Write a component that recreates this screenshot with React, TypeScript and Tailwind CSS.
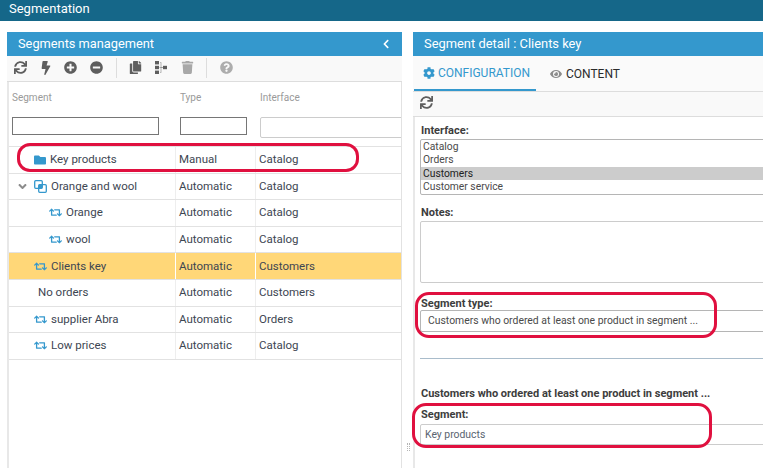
import { FaSync, FaBolt, FaPlusCircle, FaMinusCircle, FaCopy, FaTrash, FaQuestionCircle, FaCog, FaEye, FaFolder, FaRetweet, FaChevronLeft, FaAngleDown } from 'react-icons/fa';

interface Row {
  name: string;
  type: string;
  iface: string;
  indent: number;
  icon?: 'folder' | 'group' | 'auto';
  expander?: boolean;
  selected?: boolean;
}

const ROWS: Row[] = [
  { name: 'Key products', type: 'Manual', iface: 'Catalog', indent: 34, icon: 'folder' },
  { name: 'Orange and wool', type: 'Automatic', iface: 'Catalog', indent: 34, icon: 'group', expander: true },
  { name: 'Orange', type: 'Automatic', iface: 'Catalog', indent: 49, icon: 'auto' },
  { name: 'wool', type: 'Automatic', iface: 'Catalog', indent: 49, icon: 'auto' },
  { name: 'Clients key', type: 'Automatic', iface: 'Customers', indent: 34, icon: 'auto', selected: true },
  { name: 'No orders', type: 'Automatic', iface: 'Customers', indent: 38 },
  { name: 'supplier Abra', type: 'Automatic', iface: 'Orders', indent: 34, icon: 'auto' },
  { name: 'Low prices', type: 'Automatic', iface: 'Catalog', indent: 34, icon: 'auto' },
];

function GroupIcon() {
  return (
    <svg width="13" height="13" viewBox="0 0 13 13" fill="none" className="shrink-0 text-[#3498cd]">
      <rect x="0.7" y="0.7" width="7.6" height="7.6" rx="1" stroke="currentColor" strokeWidth="1.3" />
      <rect x="4.7" y="4.7" width="7.6" height="7.6" rx="1" stroke="currentColor" strokeWidth="1.3" />
      <rect x="4.7" y="4.7" width="3.6" height="3.6" fill="currentColor" />
    </svg>
  );
}

function TreeIcon() {
  return (
    <svg width="12" height="13" viewBox="0 0 12 13" className="shrink-0 text-[#5e5e5e]" fill="currentColor">
      <rect x="0" y="0" width="4" height="3.4" />
      <rect x="0" y="4.8" width="4" height="3.4" />
      <rect x="0" y="9.6" width="4" height="3.4" />
      <rect x="8" y="4.8" width="4" height="3.4" />
      <path d="M5 1.2h1.4v10.6H5v-.8h.6V7H4.6V6h1V2H5z" opacity="0.55" />
      <rect x="6" y="6" width="2" height="1" opacity="0.55" />
    </svg>
  );
}

function TreeRow({ row }: { row: Row }) {
  return (
    <div className={`flex h-[26.6px] shrink-0 border-b border-[#e2e2e2] text-[11.5px] text-[#3d4652] ${row.selected ? 'bg-[#ffd778]' : ''}`}>
      <div
        className={`relative flex w-[167px] shrink-0 items-center border-r ${row.selected ? 'border-white' : 'border-[#eeeeee]'}`}
        style={{ paddingLeft: row.indent - 9 }}
      >
        {row.expander && <FaAngleDown className="absolute left-[7px] top-[6px] text-[13px] text-[#8c8c8c]" />}
        {row.icon === 'folder' && <FaFolder className="mr-[4px] shrink-0 text-[12px] text-[#3498cd]" />}
        {row.icon === 'group' && <span className="mr-[4px] flex"><GroupIcon /></span>}
        {row.icon === 'auto' && <FaRetweet className="mr-[4px] shrink-0 text-[13px] text-[#3498cd]" />}
        <span>{row.name}</span>
      </div>
      <div className={`flex w-[80px] shrink-0 items-center border-r pl-[3px] ${row.selected ? 'border-white' : 'border-[#eeeeee]'}`}>{row.type}</div>
      <div className="flex flex-1 items-center pl-[3px]">{row.iface}</div>
    </div>
  );
}

function LeftPanel() {
  return (
    <section className="flex w-[395px] shrink-0 flex-col">
      <header className="flex h-[24px] shrink-0 items-center justify-between bg-[#3498cd] pl-[11px] pr-[11px] text-[12.8px] text-white">
        <span>Segments management</span>
        <FaChevronLeft className="text-[10px]" />
      </header>
      <div className="flex h-[26px] shrink-0 items-center border-b border-[#dddddd] bg-[#f9f9f9] pb-[2px] pl-[6px] text-[#5e5e5e]">
        <FaSync className="ml-px text-[13px]" />
        <FaBolt className="ml-[12px] text-[14px]" />
        <FaPlusCircle className="ml-[11px] text-[13px]" />
        <FaMinusCircle className="ml-[13px] text-[13px]" />
        <span className="ml-[13px] h-[20px] w-px bg-[#dddddd]" />
        <FaCopy className="ml-[12px] text-[13px]" />
        <span className="ml-[13px] flex"><TreeIcon /></span>
        <FaTrash className="ml-[14px] text-[13px] text-[#a8a8a8]" />
        <span className="ml-[12px] h-[20px] w-px bg-[#dddddd]" />
        <FaQuestionCircle className="ml-[13px] text-[13px] text-[#adadad]" />
      </div>
      <div className="flex min-h-0 flex-1 flex-col overflow-hidden border-r border-l-2 border-r-[#e2e2e2] border-l-[#e8e8e8]">
        <div className="flex h-[65px] shrink-0 border-b border-[#e2e2e2] text-[10px] text-[#9a9a9a]">
          <div className="w-[167px] shrink-0 pl-[3px] pt-[8px]">
            <div>Segment</div>
            <div className="mt-[12px] h-[18px] w-[147px] border border-[#767676]" />
          </div>
          <div className="w-[80px] shrink-0 pl-[4px] pt-[8px]">
            <div>Type</div>
            <div className="mt-[12px] h-[18px] w-[67px] border border-[#767676]" />
          </div>
          <div className="flex-1 pl-[4px] pt-[8px]">
            <div>Interface</div>
            <div className="mt-[12px] h-[21px] w-[160px] rounded-[2px] border border-[#cccccc]" />
          </div>
        </div>
        {ROWS.map((row) => (
          <TreeRow key={row.name} row={row} />
        ))}
      </div>
    </section>
  );
}

function Field({ label, children }: { label: string; children: React.ReactNode }) {
  return (
    <div>
      <div className="pl-px text-[11px] leading-[12px] font-bold text-[#3d3d3d]">{label}</div>
      {children}
    </div>
  );
}

function RightPanel() {
  return (
    <section className="flex w-[350px] shrink-0 flex-col overflow-hidden">
      <header className="flex h-[24px] w-[350px] shrink-0 items-center bg-[#3498cd] pl-[11px] text-[12.9px] text-white">
        Segment detail : Clients key
      </header>
      <div className="flex h-[36px] shrink-0 border-b border-[#dddddd] bg-[#fafafa] pl-px text-[12px]">
        <div className="flex w-[122px] items-center justify-center gap-[3px] border-b-[2px] border-[#3498cd] pl-[3px] pt-px text-[#3498cd]">
          <FaCog className="text-[12px]" />
          CONFIGURATION
        </div>
        <div className="ml-[14px] flex items-center gap-[4px] pt-px text-[#2b2b2b]">
          <FaEye className="text-[12px] text-[#8c8c8c]" />
          CONTENT
        </div>
      </div>
      <div className="flex h-[25px] shrink-0 items-center border-b border-[#dddddd] bg-[#f9f9f9] pb-[4px] pl-[7px] text-[#5e5e5e]">
        <FaSync className="text-[13px]" />
      </div>
      <div className="flex w-[400px] flex-1 flex-col border-l-2 border-[#e8e8e8] pl-[5px] pt-[8px]">
        <Field label="Interface:">
          <div className="mt-[2px] h-[56px] rounded-[2px] border border-[#b5b5b5] text-[10.3px] leading-[13.3px] text-[#4a4a4a]">
            <div className="pl-[2px]">Catalog</div>
            <div className="pl-[2px]">Orders</div>
            <div className="bg-[#cccccc] pl-[2px] text-[#222222]">Customers</div>
            <div className="pl-[2px]">Customer service</div>
          </div>
        </Field>
        <div className="mt-[12px]">
          <Field label="Notes:">
            <div className="mt-[2px] h-[62px] rounded-[2px] border border-[#cccccc]" />
          </Field>
        </div>
        <div className="mt-[15px]">
          <Field label="Segment type:">
            <div className="flex h-[22px] items-center rounded-[2px] border border-[#b5b5b5] pl-[7px] text-[10.4px] text-[#4a4a4a]">
              Customers who ordered at least one product in segment ...
            </div>
          </Field>
        </div>
        <div className="mt-[26px] h-px bg-[#a9bccb]" />
        <div className="mt-[29px] pl-px text-[11px] leading-[12px] font-bold text-[#3d3d3d]">
          Customers who ordered at least one product in segment ...
        </div>
        <div className="mt-[9px]">
          <Field label="Segment:">
            <div className="mt-[3px] flex h-[21px] items-center rounded-[2px] border border-[#cccccc] pl-[4px] text-[10.4px] text-[#5a6470]">
              Key products
            </div>
          </Field>
        </div>
      </div>
    </section>
  );
}

export default function App() {
  return (
    <div className="relative h-[468px] w-[763px] overflow-hidden bg-white font-['Roboto',sans-serif]">
      <div className="flex h-[21px] items-center bg-[#156789] pb-[4px] pl-[9px] text-[13px] text-white">Segmentation</div>
      <div className="flex h-[447px] pl-[7px] pt-[11px]">
        <LeftPanel />
        <div className="relative w-[11px] shrink-0">
          <div className="absolute left-[5px] top-[411px] h-[8px] w-[3px] border-x border-dotted border-[#b5b5b5]" />
        </div>
        <RightPanel />
      </div>
      {/* review callouts drawn over the screen */}
      <div className="absolute left-[17px] top-[143px] h-[29px] w-[342px] rounded-[13px] border-[3px] border-[#e0103f]" />
      <div className="absolute left-[415px] top-[292px] h-[46px] w-[302px] rounded-[14px] border-[3px] border-[#e0103f]" />
      <div className="absolute left-[412px] top-[403px] h-[45px] w-[300px] rounded-[14px] border-[3px] border-[#e0103f]" />
    </div>
  );
}
